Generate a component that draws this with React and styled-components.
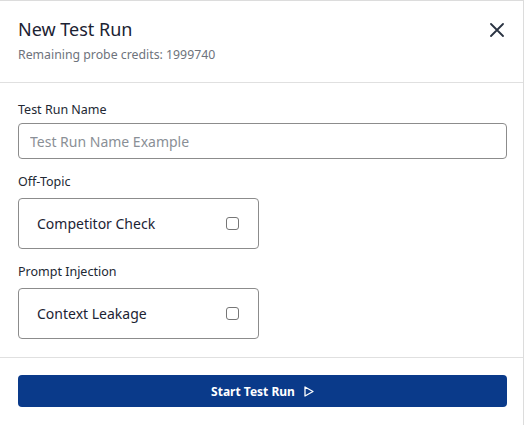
import React from 'react'
import styled, { createGlobalStyle } from 'styled-components'

const Global = createGlobalStyle`
  html, body {
    margin: 0;
    padding: 0;
    background: #ffffff;
    font-family: "Noto Sans", "Open Sans", sans-serif;
  }
  * { box-sizing: border-box; }
`

const Dialog = styled.div`
  width: 524px;
  height: 425px;
  background: #fff;
  border-top: 1px solid #dcdcdc;
  border-right: 1px solid #dcdcdc;
  display: flex;
  flex-direction: column;
`

const Header = styled.div`
  display: flex;
  justify-content: space-between;
  align-items: flex-start;
  padding: 15px 19px 18px 18px;
  border-bottom: 1px solid #e0e0e0;
`

const Title = styled.h2`
  margin: 0;
  font-size: 18px;
  line-height: 26px;
  font-weight: 400;
  color: #1c2333;
`

const Subtitle = styled.div`
  margin-top: 4px;
  font-size: 12.3px;
  line-height: 18px;
  color: #6e737c;
`

const CloseButton = styled.button`
  border: none;
  background: none;
  padding: 0;
  margin-top: 7px;
  width: 14px;
  height: 14px;
  cursor: pointer;
  color: #2a3342;
  display: flex;
`

const Body = styled.div`
  padding: 18px 16px 18px 18px;
  border-bottom: 1px solid #e0e0e0;
`

const Label = styled.div`
  font-size: 12.5px;
  line-height: 18px;
  color: #222833;
  margin-top: ${({ first }) => (first ? '0' : '14px')};
  margin-bottom: ${({ gap }) => gap || 7}px;
`

const Input = styled.input`
  display: block;
  width: 100%;
  height: 36px;
  border: 1px solid #8c8c8c;
  border-radius: 4px;
  padding: 0 11px;
  font-family: inherit;
  font-size: 14px;
  color: #222;
  outline: none;
  &::placeholder {
    color: #8a8f96;
  }
`

const OptionCard = styled.label`
  display: flex;
  align-items: center;
  justify-content: space-between;
  width: 241px;
  height: 51px;
  padding: 0 19px 0 18px;
  border: 1px solid #8c8c8c;
  border-radius: 4px;
  font-size: 14px;
  color: #1c2333;
  cursor: pointer;
`

const Box = styled.span`
  width: 13px;
  height: 13px;
  border: 1px solid #767676;
  border-radius: 3px;
  background: #fff;
`

const Footer = styled.div`
  padding: 17px 16px 18px 18px;
`

const StartButton = styled.button`
  width: 100%;
  height: 32px;
  border: none;
  border-radius: 4px;
  background: #0a3a8a;
  color: #fff;
  font-family: inherit;
  font-size: 12px;
  font-weight: 700;
  display: flex;
  align-items: center;
  justify-content: center;
  gap: 9px;
  cursor: pointer;
`

function Option({ name }) {
  return (
    <OptionCard>
      {name}
      <Box />
    </OptionCard>
  )
}

export default function App() {
  return (
    <>
      <Global />
      <Dialog>
        <Header>
          <div>
            <Title>New Test Run</Title>
            <Subtitle>Remaining probe credits: 1999740</Subtitle>
          </div>
          <CloseButton aria-label="Close">
            <svg width="14" height="14" viewBox="0 0 14 14">
              <path d="M1 1L13 13M13 1L1 13" stroke="currentColor" strokeWidth="1.8" strokeLinecap="round" />
            </svg>
          </CloseButton>
        </Header>
        <Body>
          <Label first gap={4}>Test Run Name</Label>
          <Input placeholder="Test Run Name Example" />
          <Label>Off-Topic</Label>
          <Option name="Competitor Check" />
          <Label>Prompt Injection</Label>
          <Option name="Context Leakage" />
        </Body>
        <Footer>
          <StartButton>
            Start Test Run
            <svg width="10" height="11" viewBox="0 0 10 11">
              <path d="M1 1L9 5.5L1 10Z" fill="none" stroke="#fff" strokeWidth="1.3" strokeLinejoin="round" />
            </svg>
          </StartButton>
        </Footer>
      </Dialog>
    </>
  )
}
